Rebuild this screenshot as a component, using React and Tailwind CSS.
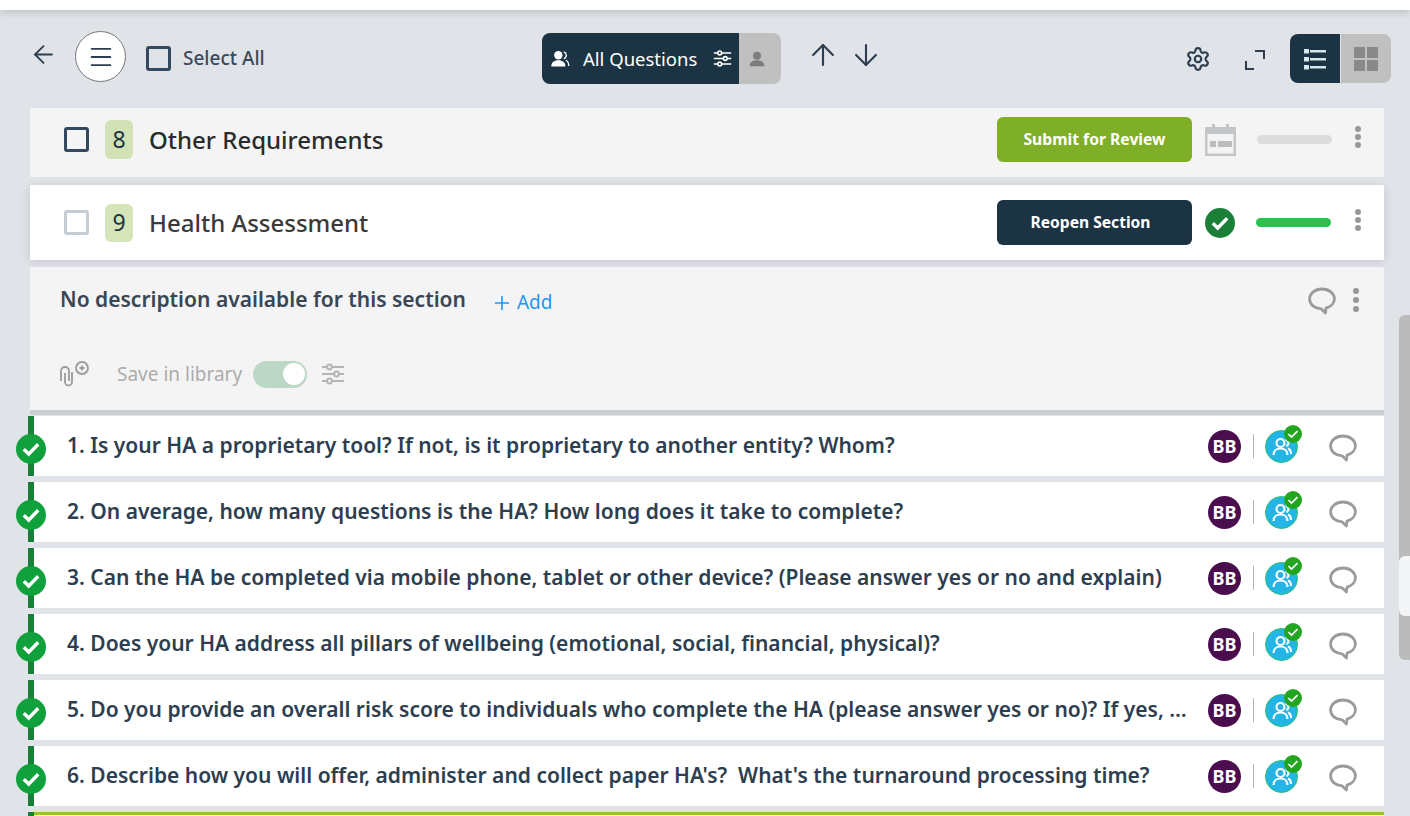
import { ArrowLeft, ArrowUp, ArrowDown, Menu, Settings } from "lucide-react";

const questions = [
  "1. Is your HA a proprietary tool? If not, is it proprietary to another entity? Whom?",
  "2. On average, how many questions is the HA? How long does it take to complete?",
  "3. Can the HA be completed via mobile phone, tablet or other device? (Please answer yes or no and explain)",
  "4. Does your HA address all pillars of wellbeing (emotional, social, financial, physical)?",
  "5. Do you provide an overall risk score to individuals who complete the HA (please answer yes or no)? If yes, …",
  "6. Describe how you will offer, administer and collect paper HA's?  What's the turnaround processing time?",
];

const Bubble = ({ className }) => (
  <svg viewBox="0 0 28 28" fill="none" className={className}>
    <path
      d="M14 2C7 2 1.6 6.2 1.6 12c0 5.6 5 9.6 11.4 9.800l4.400 4.200.6-4.800c4.800-1.400 8.400-5 8.400-9.200C26.400 6.200 21 2 14 2z"
      stroke="#9b9b9b"
      strokeWidth="2.8"
      strokeLinejoin="round"
    />
  </svg>
);

const Dots = ({ className }) => (
  <div className={`flex flex-col items-center justify-between w-[7px] ${className}`}>
    <span className="w-[6px] h-[6px] rounded-full bg-[#979797]" />
    <span className="w-[6px] h-[6px] rounded-full bg-[#979797]" />
    <span className="w-[6px] h-[6px] rounded-full bg-[#979797]" />
  </div>
);

const Sliders = ({ color, className }) => (
  <svg viewBox="0 0 24 24" fill="none" stroke={color} strokeWidth="2" className={className}>
    <path d="M1 5h5M11 5h12M1 12h12M18 12h5M1 19h5M11 19h12" />
    <circle cx="8.500" cy="5" r="2.400" />
    <circle cx="15.500" cy="12" r="2.400" />
    <circle cx="8.500" cy="19" r="2.400" />
  </svg>
);

const CheckCircle = ({ bg, className }) => (
  <div className={`rounded-full flex items-center justify-center ${bg} ${className}`}>
    <svg viewBox="0 0 20 20" fill="none" className="w-[20px] h-[20px]">
      <path d="M2.800 10.300l4.900 4.700 9.500-9.700" stroke="#fff" strokeWidth="3.400" />
    </svg>
  </div>
);

const QuestionRow = ({ text }) => (
  <div className="flex h-[60px] mb-[6px]">
    <div className="relative w-[6px] bg-[#1a8038] shrink-0">
      <CheckCircle bg="bg-[#10a03c]" className="absolute left-[-12px] top-[18px] w-[30px] h-[30px]" />
    </div>
    <div className="flex-1 min-w-0 bg-white flex items-center pl-[34px]">
      <div className="w-[1124px] -ml-px mr-px whitespace-pre text-[21px] font-semibold text-[#2d3e50] leading-[58px] h-[60px]">
        {text}
      </div>
      <div className="ml-[16px] w-[33px] h-[33px] rounded-full bg-[#4a0e4e] text-white text-[18px] font-bold flex items-center justify-center">
        BB
      </div>
      <div className="ml-[12px] w-px h-[24px] bg-[#b5b5b5]" />
      <div className="relative ml-[11px] w-[33px] h-[33px] mt-px rounded-full bg-[#22b5e6] border border-[#2fc06a] flex items-center justify-center">
        <svg viewBox="0 0 24 24" fill="none" stroke="#fff" strokeWidth="2.200" className="w-[24px] h-[24px]">
          <circle cx="10.500" cy="8" r="4" />
          <path d="M3.500 20c0-4 3-6.500 7-6.500s7 2.500 7 6.500" />
          <path d="M15.500 4.500c2 .5 3 2 3 3.600 0 1.400-.8 2.600-2 3.200M18 13.500c2 .8 3 3 3 5.500" />
        </svg>
        <div className="absolute right-[-5px] top-[-6px] w-[18px] h-[18px] rounded-full bg-[#22a51f] flex items-center justify-center">
          <svg viewBox="0 0 18 18" fill="none" className="w-[18px] h-[18px]">
            <path d="M4.500 9.200l3 2.900 6-6" stroke="#fff" strokeWidth="1.600" />
          </svg>
        </div>
      </div>
      <Bubble className="ml-[31px] w-[28px] h-[28px] mt-[3px]" />
    </div>
  </div>
);

export default function App() {
  return (
    <div className="relative h-[816px] overflow-hidden bg-[#e0e3e8] font-['Noto_Sans',sans-serif]">
      <div className="h-[10px] bg-white shadow-[0_2px_8px_rgba(0,0,0,0.18)]" />

      {/* toolbar */}
      <div className="h-[98px] pt-[21px] flex items-start">
        <ArrowLeft className="ml-[29px] mt-[9px] w-[29px] h-[29px] text-[#2d3e50]" strokeWidth={1.5} />
        <button className="ml-[17px] w-[51px] h-[51px] rounded-full bg-white border border-[#777] flex items-center justify-center">
          <Menu className="w-[28px] h-[28px] text-[#2d3e50]" strokeWidth={1.6} />
        </button>
        <div className="ml-[20px] mt-[15px] w-[25px] h-[25px] rounded-[3px] border-[3px] border-[#34495e]" />
        <span className="ml-[12px] mt-[12px] text-[19px] leading-[30px] font-medium text-[#3a4a5a]">Select All</span>

        <div className="absolute left-[542px] top-[33px] flex h-[51px] w-[239px] rounded-[8px] overflow-hidden">
          <div className="w-[197px] bg-[#1c3344] flex items-center text-white">
            <svg viewBox="0 0 24 24" className="ml-[8px] w-[20px] h-[20px]" fill="#fff">
              <circle cx="10" cy="7.500" r="5" />
              <path d="M1.500 21c0-5 3.500-7.500 8.500-7.500s8.500 2.500 8.500 7.500z" />
              <path d="M16.500 3.500c2 .8 3 2.200 3 4s-1 3.400-3 4.200M19 13.500c2.500 1 3.500 3.500 3.500 7" fill="none" stroke="#fff" strokeWidth="1.600" />
            </svg>
            <span className="ml-[13px] text-[18.5px]">All Questions</span>
            <Sliders color="#fff" className="ml-[16px] w-[19px] h-[19px]" />
          </div>
          <div className="flex-1 bg-[#c0c0c0] flex items-center justify-center pr-[6px]">
            <svg viewBox="0 0 24 24" className="w-[16px] h-[16px]" fill="#7d7d7d">
              <circle cx="12" cy="7" r="6" />
              <path d="M1 23c0-6 4-9 11-9s11 3 11 9z" />
            </svg>
          </div>
        </div>
        <ArrowUp className="absolute left-[806px] top-[38px] w-[34px] h-[34px] text-[#2d3e50]" strokeWidth={1.5} />
        <ArrowDown className="absolute left-[849px] top-[38px] w-[34px] h-[34px] text-[#2d3e50]" strokeWidth={1.5} />

        <Settings className="absolute left-[1185px] top-[46px] w-[26px] h-[26px] text-[#2d3e50]" strokeWidth={2} />
        <svg viewBox="0 0 20 20" fill="none" stroke="#2d3e50" strokeWidth="2" className="absolute left-[1245px] top-[50px] w-[20px] h-[20px]">
          <path d="M10 1h9v8M1 11v8h8" />
        </svg>
        <div className="absolute left-[1290px] top-[34px] flex h-[49px] w-[101px] rounded-[8px] overflow-hidden">
          <div className="w-[50px] bg-[#1c3344] flex items-center justify-center">
            <svg viewBox="0 0 24 24" fill="#d5e6ef" className="w-[24px] h-[24px]">
              <rect x="1" y="2" width="5" height="4.500" />
              <rect x="1" y="10" width="5" height="4.500" />
              <rect x="1" y="18" width="5" height="4.500" />
              <rect x="7" y="3" width="16" height="2.500" />
              <rect x="7" y="11" width="16" height="2.500" />
              <rect x="7" y="19" width="16" height="2.500" />
            </svg>
          </div>
          <div className="ml-px flex-1 bg-[#c0c0c0] flex items-center justify-center">
            <div className="grid grid-cols-2 gap-[2px]">
              <span className="w-[11px] h-[11px] bg-[#898989]" />
              <span className="w-[11px] h-[11px] bg-[#898989]" />
              <span className="w-[11px] h-[11px] bg-[#898989]" />
              <span className="w-[11px] h-[11px] bg-[#898989]" />
            </div>
          </div>
        </div>
      </div>

      {/* section 8 */}
      <div className="ml-[30px] mr-[26px] h-[69px] pb-[6px] bg-[#f4f4f4] flex items-center">
        <div className="ml-[34px] w-[25px] h-[25px] rounded-[3px] border-[3px] border-[#34495e]" />
        <div className="ml-[16px] w-[28px] h-[39px] rounded-[6px] bg-[#d2e2b6] flex items-center justify-center text-[23px] text-[#1c3344]">8</div>
        <h2 className="ml-[16px] text-[24px] font-medium text-[#2b2b2b] flex-1">Other Requirements</h2>
        <button className="w-[195px] h-[45px] rounded-[6px] bg-[#7fae27] text-white text-[15.7px] font-bold">Submit for Review</button>
        <svg viewBox="0 0 31 32" className="ml-[13px] w-[31px] h-[32px]">
          <rect x="0" y="3" width="31" height="29" fill="#c3c6c9" />
          <rect x="7" y="0" width="3" height="5" fill="#c3c6c9" />
          <rect x="21" y="0" width="3" height="5" fill="#c3c6c9" />
          <rect x="2.500" y="10" width="26" height="19.500" fill="#f4f4f4" />
          <rect x="5" y="17" width="6" height="6" fill="#bcbcbc" />
          <rect x="13" y="17" width="14" height="6" fill="#bcbcbc" />
        </svg>
        <div className="ml-[21px] w-[75px] h-[9px] rounded-full bg-[#dcdcdc]" />
        <Dots className="ml-[22px] h-[22px] mb-[5px]" />
        <div className="w-[23px]" />
      </div>

      {/* section 9 */}
      <div className="mt-[8px] ml-[30px] mr-[26px] h-[75px] bg-white flex items-center shadow-[0_2px_10px_rgba(0,0,0,0.12)]">
        <div className="ml-[34px] w-[25px] h-[25px] rounded-[3px] border-[3px] border-[#c5ccd3]" />
        <div className="ml-[16px] w-[28px] h-[38px] rounded-[6px] bg-[#d5e5b9] flex items-center justify-center text-[23px] text-[#1c3344]">9</div>
        <h2 className="ml-[16px] text-[24px] font-medium text-[#3a3a3a] flex-1">Health Assessment</h2>
        <button className="w-[195px] h-[45px] rounded-[6px] bg-[#1c3344] text-white text-[15.6px] font-bold pr-[8px]">Reopen Section</button>
        <CheckCircle bg="bg-[#1a8038]" className="ml-[13px] w-[30px] h-[30px]" />
        <div className="ml-[21px] w-[75px] h-[9px] rounded-full bg-[#28c24e]" />
        <Dots className="ml-[23px] h-[22px] mb-[5px]" />
        <div className="w-[23px]" />
      </div>

      {/* description */}
      <div className="mt-[7px] ml-[30px] mr-[26px] h-[148px] bg-[#f4f4f4] border-b-[5px] border-[#cbced2] pl-[30px] pr-[25px] pt-[18px]">
        <div className="flex items-center h-[30px]">
          <span className="text-[21px] font-semibold text-[#3a4654]">No description available for this section</span>
          <svg viewBox="0 0 16 16" stroke="#2196f3" strokeWidth="1.600" className="ml-[28px] mt-[5px] w-[16px] h-[16px]">
            <path d="M8 1v14M1 8h14" />
          </svg>
          <span className="ml-[7px] mt-[4px] text-[19px] text-[#2196f3] flex-1">Add</span>
          <Bubble className="w-[28px] h-[28px] mt-[2px]" />
          <Dots className="ml-[16px] h-[24px]" />
        </div>
        <div className="flex items-center mt-[44px] h-[30px]">
          <svg viewBox="0 0 31 26" fill="none" stroke="#9b9b9b" strokeWidth="1.800" className="w-[31px] h-[26px] -ml-px">
            <path d="M2 20V10a4 4 0 0 1 8 0M6 12v9a3.500 3.500 0 0 0 7 0V11M10 10v10" />
            <circle cx="23" cy="7" r="6" />
            <path d="M23 4.500v5M20.500 7h5" />
          </svg>
          <span className="ml-[27px] text-[19px] text-[#ababab]">Save in library</span>
          <div className="ml-[11px] w-[54px] h-[27px] rounded-full bg-[#bdd7c6] flex items-center justify-end pr-[2px]">
            <span className="w-[22px] h-[22px] rounded-full bg-white" />
          </div>
          <Sliders color="#b5b5b5" className="ml-[14px] w-[24px] h-[24px]" />
        </div>
      </div>

      {/* questions */}
      <div className="mt-px ml-[28px] mr-[26px]">
        {questions.map((q) => (
          <QuestionRow key={q} text={q} />
        ))}
        <div className="flex h-[20px]">
          <div className="w-[6px] bg-[#1a8038]" />
          <div className="flex-1 border-t-[3px] border-[#9ac42e] bg-white" />
        </div>
      </div>

      {/* scrollbar */}
      <div className="absolute left-[1399px] top-[315px] w-[11px] h-[345px] rounded-l-[6px] bg-[#bbbbbb]" />
      <div className="absolute left-[1399px] top-[556px] w-[11px] h-[60px] rounded-l-[6px] bg-[#f4f5f6]" />
    </div>
  );
}
